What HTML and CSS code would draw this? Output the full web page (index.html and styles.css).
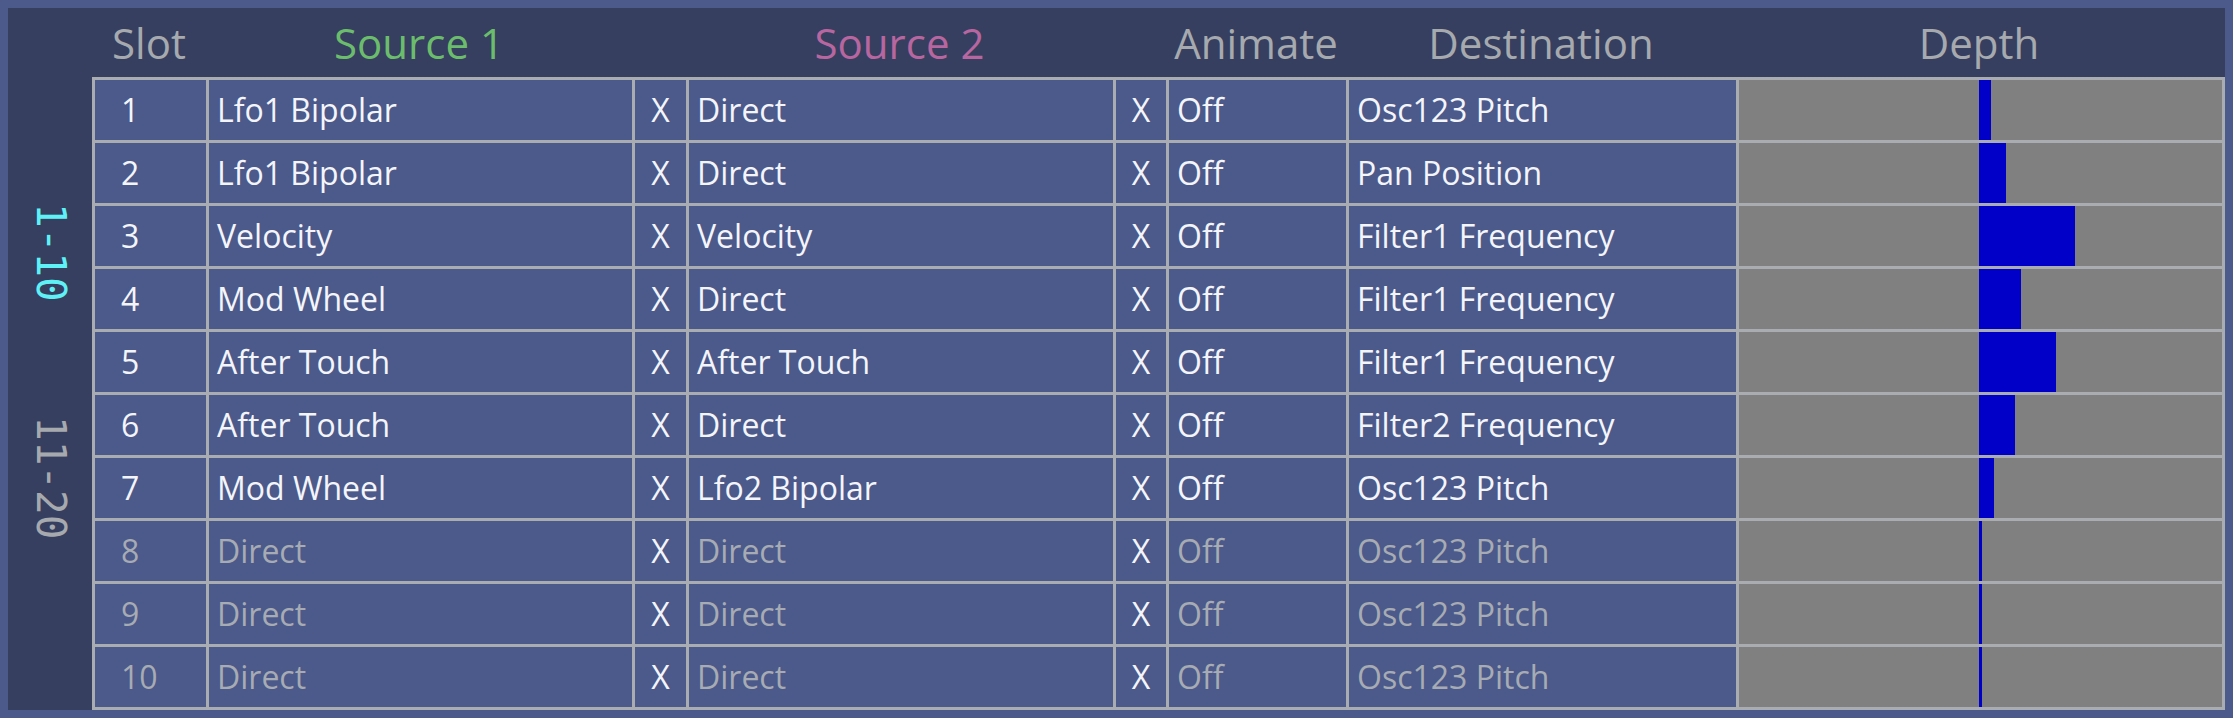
FILE: index.html
```html
<!DOCTYPE html>
<html lang="en">
<head>
<meta charset="utf-8">
<title>Mod Matrix</title>
<link rel="stylesheet" href="styles.css">
</head>
<body>
<div class="panel">
  <div class="tabs">
    <div class="tab tab-active">1-10</div>
    <div class="tab">11-20</div>
  </div>
  <div class="header">
    <div class="hcell">Slot</div>
    <div class="hcell src1">Source 1</div>
    <div class="hcell"></div>
    <div class="hcell src2">Source 2</div>
    <div class="hcell"></div>
    <div class="hcell">Animate</div>
    <div class="hcell">Destination</div>
    <div class="hcell">Depth</div>
  </div>
  <div class="matrix">
    <div class="row">
      <div class="cell slot">1</div><div class="cell">Lfo1 Bipolar</div><div class="cell x">X</div><div class="cell">Direct</div><div class="cell x">X</div><div class="cell">Off</div><div class="cell">Osc123 Pitch</div>
      <div class="cell depth"><div class="bar" style="width:12px"></div></div>
    </div>
    <div class="row">
      <div class="cell slot">2</div><div class="cell">Lfo1 Bipolar</div><div class="cell x">X</div><div class="cell">Direct</div><div class="cell x">X</div><div class="cell">Off</div><div class="cell">Pan Position</div>
      <div class="cell depth"><div class="bar" style="width:27px"></div></div>
    </div>
    <div class="row">
      <div class="cell slot">3</div><div class="cell">Velocity</div><div class="cell x">X</div><div class="cell">Velocity</div><div class="cell x">X</div><div class="cell">Off</div><div class="cell">Filter1 Frequency</div>
      <div class="cell depth"><div class="bar" style="width:96px"></div></div>
    </div>
    <div class="row">
      <div class="cell slot">4</div><div class="cell">Mod Wheel</div><div class="cell x">X</div><div class="cell">Direct</div><div class="cell x">X</div><div class="cell">Off</div><div class="cell">Filter1 Frequency</div>
      <div class="cell depth"><div class="bar" style="width:42px"></div></div>
    </div>
    <div class="row">
      <div class="cell slot">5</div><div class="cell">After Touch</div><div class="cell x">X</div><div class="cell">After Touch</div><div class="cell x">X</div><div class="cell">Off</div><div class="cell">Filter1 Frequency</div>
      <div class="cell depth"><div class="bar" style="width:77px"></div></div>
    </div>
    <div class="row">
      <div class="cell slot">6</div><div class="cell">After Touch</div><div class="cell x">X</div><div class="cell">Direct</div><div class="cell x">X</div><div class="cell">Off</div><div class="cell">Filter2 Frequency</div>
      <div class="cell depth"><div class="bar" style="width:36px"></div></div>
    </div>
    <div class="row">
      <div class="cell slot">7</div><div class="cell">Mod Wheel</div><div class="cell x">X</div><div class="cell">Lfo2 Bipolar</div><div class="cell x">X</div><div class="cell">Off</div><div class="cell">Osc123 Pitch</div>
      <div class="cell depth"><div class="bar" style="width:15px"></div></div>
    </div>
    <div class="row row-idle">
      <div class="cell slot">8</div><div class="cell">Direct</div><div class="cell x">X</div><div class="cell">Direct</div><div class="cell x">X</div><div class="cell">Off</div><div class="cell">Osc123 Pitch</div>
      <div class="cell depth"><div class="bar" style="width:3px"></div></div>
    </div>
    <div class="row row-idle">
      <div class="cell slot">9</div><div class="cell">Direct</div><div class="cell x">X</div><div class="cell">Direct</div><div class="cell x">X</div><div class="cell">Off</div><div class="cell">Osc123 Pitch</div>
      <div class="cell depth"><div class="bar" style="width:3px"></div></div>
    </div>
    <div class="row row-idle">
      <div class="cell slot">10</div><div class="cell">Direct</div><div class="cell x">X</div><div class="cell">Direct</div><div class="cell x">X</div><div class="cell">Off</div><div class="cell">Osc123 Pitch</div>
      <div class="cell depth"><div class="bar" style="width:3px"></div></div>
    </div>
  </div>
</div>
</body>
</html>
```

FILE: styles.css
```css
html, body {
  margin: 0;
  padding: 0;
}

body {
  background: #4b5a8a;
  width: 2233px;
  height: 718px;
  overflow: hidden;
  font-family: "Open Sans", "Noto Sans", sans-serif;
}

.panel {
  margin: 8px;
  width: 2217px;
  height: 702px;
  background: #363f60;
  display: grid;
  grid-template-columns: 84px 2133px;
  grid-template-rows: 69px 633px;
}

.tabs {
  grid-column: 1;
  grid-row: 1 / span 2;
  display: flex;
  flex-direction: column;
  padding-top: 132px;
}

.tab {
  height: 225px;
  display: flex;
  align-items: center;
  justify-content: center;
  writing-mode: vertical-rl;
  font-family: "DejaVu Sans Mono", "Liberation Mono", monospace;
  font-size: 41px;
  line-height: 41px;
  color: #a6aaae;
}

.tab-active {
  color: #5ef2f6;
}

.header,
.row {
  display: grid;
  grid-template-columns: 114px 426px 54px 427px 53px 180px 390px 486px;
}

.header {
  grid-column: 2;
  grid-row: 1;
}

.hcell {
  padding-top: 1px;
  line-height: 68px;
  font-size: 42px;
  text-align: center;
  color: #a6aaae;
  white-space: nowrap;
}

.hcell.src1 {
  color: #6bbd6c;
}

.hcell.src2 {
  color: #b8669f;
}

.matrix {
  grid-column: 2;
  grid-row: 2;
  border-right: 3px solid #a9adb1;
  border-bottom: 3px solid #a9adb1;
}

.cell {
  height: 60px;
  border-left: 3px solid #a9adb1;
  border-top: 3px solid #a9adb1;
  background: #4b5a8a;
  color: #f4f5fa;
  font-size: 32px;
  line-height: 60px;
  padding-left: 8px;
  white-space: nowrap;
  overflow: hidden;
}

.cell.slot {
  padding-left: 26px;
}

.cell.x {
  padding-left: 0;
  text-align: center;
}

.row-idle .cell {
  color: #a7abb3;
}

.row-idle .cell.x {
  color: #f4f5fa;
}

.cell.depth {
  padding-left: 0;
  background: #808080;
  display: flex;
}

.bar {
  margin-left: calc(50% - 1.5px);
  height: 60px;
  background: #0000c8;
}
```
